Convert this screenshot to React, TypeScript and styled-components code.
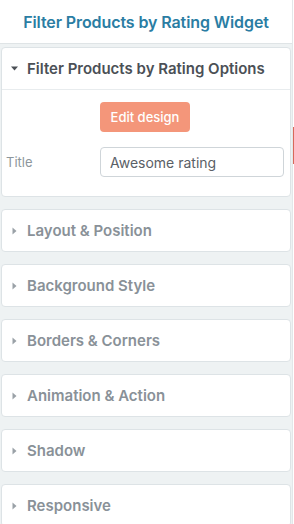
import React from 'react';
import styled, { createGlobalStyle } from 'styled-components';

const GlobalStyle = createGlobalStyle`
  body {
    margin: 0;
    background: #ffffff;
    font-family: Inter, "Noto Sans", sans-serif;
  }
`;

const Frame = styled.div`
  display: flex;
  width: 294px;
  height: 524px;
  overflow: hidden;
`;

const Sidebar = styled.div`
  width: 292px;
  display: flex;
  flex-direction: column;
  background: #eef2f3;
`;

const ScrollStrip = styled.div`
  width: 1px;
  border-left: 1px solid #e3e7e9;
  background: #ffffff;
`;

const ScrollThumb = styled.div`
  margin-top: 127px;
  height: 37px;
  background: #d9685a;
`;

const TopBar = styled.div`
  height: 43px;
  flex-shrink: 0;
  display: flex;
  align-items: center;
  justify-content: center;
  background: #ffffff;
  border-bottom: 1px solid #dfe4e6;
`;

const TopTitle = styled.h1`
  margin: 0;
  font-size: 16px;
  font-weight: 600;
  letter-spacing: -0.1px;
  color: #2a7da3;
`;

const PanelList = styled.div`
  display: flex;
  flex-direction: column;
  gap: 12px;
  padding: 3px 1px 0;
`;

const Panel = styled.section`
  background: #ffffff;
  border: 1px solid #dde3e6;
  border-radius: 4px;
  flex-shrink: 0;
`;

const PanelHead = styled.div<{ open?: boolean }>`
  height: 41px;
  display: flex;
  align-items: center;
  gap: 9px;
  padding-left: 9px;
  font-size: 15px;
  font-weight: 600;
  color: ${(p) => (p.open ? '#4b5056' : '#899198')};
  border-bottom: ${(p) => (p.open ? '1px solid #e8ecee' : 'none')};
`;

const CaretBox = styled.span`
  width: 7px;
  display: flex;
  justify-content: center;
`;

const PanelBody = styled.div`
  display: grid;
  grid-template-columns: 94px 1fr;
  row-gap: 15px;
  align-items: center;
  padding: 12px 5px 19px 4px;
`;

const EditButton = styled.button`
  grid-column: 2;
  justify-self: start;
  width: 90px;
  height: 30px;
  border: none;
  border-radius: 4px;
  background: #f4967a;
  color: #ffffff;
  font-family: inherit;
  font-size: 13px;
  font-weight: 500;
`;

const FieldLabel = styled.label`
  font-size: 13px;
  color: #8d969c;
`;

const TextInput = styled.input`
  box-sizing: border-box;
  width: 184px;
  height: 30px;
  padding: 0 9px;
  border: 1px solid #cfd5d9;
  border-radius: 4px;
  font-family: inherit;
  font-size: 14px;
  color: #5a6066;
  outline: none;
`;

function Caret({ down }: { down?: boolean }) {
  return down ? (
    <svg width="7" height="5" viewBox="0 0 7 5">
      <path d="M0 0.5h7L3.5 4.5z" fill="#4b5056" />
    </svg>
  ) : (
    <svg width="5" height="8" viewBox="0 0 5 8">
      <path d="M0.5 0.5v7L4.5 4z" fill="#9aa1a7" />
    </svg>
  );
}

const sections = [
  'Layout & Position',
  'Background Style',
  'Borders & Corners',
  'Animation & Action',
  'Shadow',
  'Responsive',
];

export default function App() {
  return (
    <Frame>
      <GlobalStyle />
      <Sidebar>
        <TopBar>
          <TopTitle>Filter Products by Rating Widget</TopTitle>
        </TopBar>
        <PanelList>
          <Panel>
            <PanelHead open>
              <CaretBox>
                <Caret down />
              </CaretBox>
              Filter Products by Rating Options
            </PanelHead>
            <PanelBody>
              <EditButton>Edit design</EditButton>
              <FieldLabel>Title</FieldLabel>
              <TextInput defaultValue="Awesome rating" />
            </PanelBody>
          </Panel>
          {sections.map((s) => (
            <Panel key={s}>
              <PanelHead>
                <CaretBox>
                  <Caret />
                </CaretBox>
                {s}
              </PanelHead>
            </Panel>
          ))}
        </PanelList>
      </Sidebar>
      <ScrollStrip>
        <ScrollThumb />
      </ScrollStrip>
    </Frame>
  );
}
